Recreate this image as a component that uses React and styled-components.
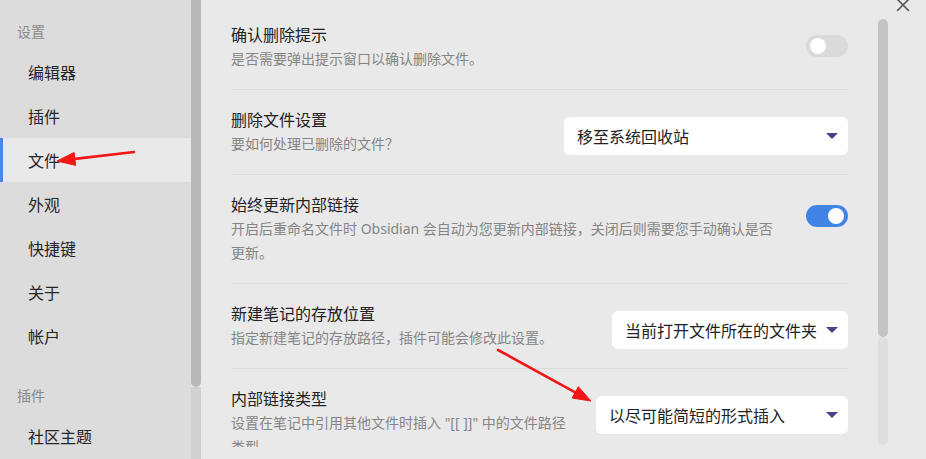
import React from 'react';
import styled, { createGlobalStyle } from 'styled-components';

const GlobalStyle = createGlobalStyle`
  html, body {
    margin: 0;
    padding: 0;
  }
  body {
    font-family: "Noto Sans", "Noto Sans CJK SC", sans-serif;
    overflow: hidden;
  }
`;

const Window = styled.div`
  position: relative;
  display: flex;
  width: 926px;
  height: 459px;
  overflow: hidden;
  background: #e9e9e9;
`;

const Sidebar = styled.div`
  display: flex;
  flex-shrink: 0;
`;

const Nav = styled.nav`
  width: 191px;
  background: #dcdcdc;
  padding-top: 22px;
`;

const GroupTitle = styled.div`
  padding-left: 17px;
  font-size: 14px;
  line-height: 20px;
  color: #8a8a8a;
  margin: ${({ $first }) => ($first ? '0' : '28px')} 0 8px;
`;

const NavItem = styled.div`
  position: relative;
  height: 44px;
  display: flex;
  align-items: center;
  padding-left: 28px;
  font-size: 16px;
  color: #262626;
  background: ${({ $active }) => ($active ? '#e9e9e9' : 'transparent')};
  &::before {
    content: '';
    display: ${({ $active }) => ($active ? 'block' : 'none')};
    position: absolute;
    left: 0;
    top: 0;
    bottom: 0;
    width: 3px;
    background: #4a88e6;
  }
`;

const ScrollCol = styled.div`
  display: flex;
  flex-direction: column;
  width: 10px;
  padding-top: ${({ $top }) => $top || 0}px;
`;

const Thumb = styled.div`
  height: ${({ $h }) => $h}px;
  background: ${({ $color }) => $color};
  border-radius: ${({ $radius }) => $radius};
`;

const Track = styled.div`
  height: ${({ $h }) => ($h ? `${$h}px` : 'auto')};
  flex: ${({ $h }) => ($h ? 'none' : 1)};
  background: ${({ $color }) => $color};
  border-radius: ${({ $radius }) => $radius};
`;

const Main = styled.main`
  flex: 1;
  display: flex;
  align-items: flex-start;
  background: #e9e9e9;
`;

const Content = styled.div`
  width: 617px;
  height: 442px;
  overflow: hidden;
  padding: 5px 0 0 30px;
  margin-right: 30px;
`;

const Row = styled.div`
  display: flex;
  align-items: flex-start;
  padding: 18px 0;
  border-top: ${({ $first }) => ($first ? 'none' : '1px solid #dddddd')};
`;

const Info = styled.div`
  flex: 1;
  margin-right: 24px;
`;

const Title = styled.div`
  font-size: 16px;
  line-height: 24px;
  color: #222;
`;

const Desc = styled.div`
  font-size: 14px;
  line-height: 24px;
  color: #858585;
`;

const Toggle = styled.div`
  position: relative;
  flex-shrink: 0;
  width: 42px;
  height: 22px;
  margin-top: 12px;
  border-radius: 11px;
  background: ${({ $on }) => ($on ? '#3f84e6' : '#dadada')};
  &::after {
    content: '';
    position: absolute;
    top: 3px;
    left: ${({ $on }) => ($on ? '22px' : '4px')};
    width: 16px;
    height: 16px;
    border-radius: 50%;
    background: #fff;
  }
`;

const Dropdown = styled.div`
  flex-shrink: 0;
  box-sizing: border-box;
  width: ${({ $width }) => $width}px;
  height: 38px;
  margin-top: 9px;
  padding: 0 10px 0 13px;
  display: flex;
  align-items: center;
  justify-content: space-between;
  background: #fff;
  border-radius: 6px;
  font-size: 16px;
  color: #222;
`;

const Caret = styled.span`
  width: 0;
  height: 0;
  border-left: 6px solid transparent;
  border-right: 6px solid transparent;
  border-top: 6px solid #4a3f8c;
`;

const CloseButton = styled.svg`
  position: absolute;
  left: 896px;
  top: -2px;
`;

const Annotations = styled.svg`
  position: absolute;
  left: 0;
  top: 0;
  pointer-events: none;
`;

const groups = [
  { title: '设置', items: ['编辑器', '插件', '文件', '外观', '快捷键', '关于', '帐户'] },
  { title: '插件', items: ['社区主题'] },
];

const settings = [
  { title: '确认删除提示', desc: '是否需要弹出提示窗口以确认删除文件。', toggle: false },
  { title: '删除文件设置', desc: '要如何处理已删除的文件？', select: '移至系统回收站', width: 284 },
  {
    title: '始终更新内部链接',
    desc: '开启后重命名文件时 Obsidian 会自动为您更新内部链接，关闭后则需要您手动确认是否更新。',
    toggle: true,
  },
  { title: '新建笔记的存放位置', desc: '指定新建笔记的存放路径，插件可能会修改此设置。', select: '当前打开文件所在的文件夹', width: 236 },
  { title: '内部链接类型', desc: '设置在笔记中引用其他文件时插入 "[[ ]]" 中的文件路径类型', select: '以尽可能简短的形式插入', width: 252 },
];

const Arrow = ({ from, to }) => {
  const dx = to[0] - from[0];
  const dy = to[1] - from[1];
  const len = Math.hypot(dx, dy);
  const ux = dx / len;
  const uy = dy / len;
  const bx = to[0] - ux * 18;
  const by = to[1] - uy * 18;
  const px = -uy * 6.5;
  const py = ux * 6.5;
  return (
    <g fill="#f21616" stroke="#f21616">
      <line x1={from[0]} y1={from[1]} x2={bx + ux * 2} y2={by + uy * 2} strokeWidth="2.6" strokeLinecap="round" />
      <polygon points={`${to[0]},${to[1]} ${bx + px},${by + py} ${bx - px},${by - py}`} strokeWidth="1" />
    </g>
  );
};

const App = () => (
  <Window>
    <GlobalStyle />
    <Sidebar>
      <Nav>
        {groups.map((g, gi) => (
          <div key={g.title + gi}>
            <GroupTitle $first={gi === 0}>{g.title}</GroupTitle>
            {g.items.map((item) => (
              <NavItem key={item} $active={gi === 0 && item === '文件'}>{item}</NavItem>
            ))}
          </div>
        ))}
      </Nav>
      <ScrollCol>
        <Thumb $h={387} $color="#b9b9b9" $radius="0 0 5px 5px" />
        <Track $color="#d1d1d1" $radius="0" />
      </ScrollCol>
    </Sidebar>
    <Main>
      <Content>
        {settings.map((s, i) => (
          <Row key={s.title} $first={i === 0}>
            <Info>
              <Title>{s.title}</Title>
              <Desc>{s.desc}</Desc>
            </Info>
            {s.select ? (
              <Dropdown $width={s.width}>
                {s.select}
                <Caret />
              </Dropdown>
            ) : (
              <Toggle $on={s.toggle} />
            )}
          </Row>
        ))}
      </Content>
      <ScrollCol $top={19}>
        <Thumb $h={318} $color="#c4c4c4" $radius="5px" />
        <Track $h={108} $color="#dedede" $radius="5px" />
      </ScrollCol>
    </Main>
    <CloseButton width="14" height="14" viewBox="0 0 14 14">
      <path d="M1.5 1.5 L12.5 12.5 M12.5 1.5 L1.5 12.5" stroke="#555" strokeWidth="1.6" strokeLinecap="round" />
    </CloseButton>
    <Annotations width="926" height="459">
      <Arrow from={[134, 152]} to={[57, 161]} />
      <Arrow from={[498, 350]} to={[591, 401]} />
    </Annotations>
  </Window>
);

export default App;
